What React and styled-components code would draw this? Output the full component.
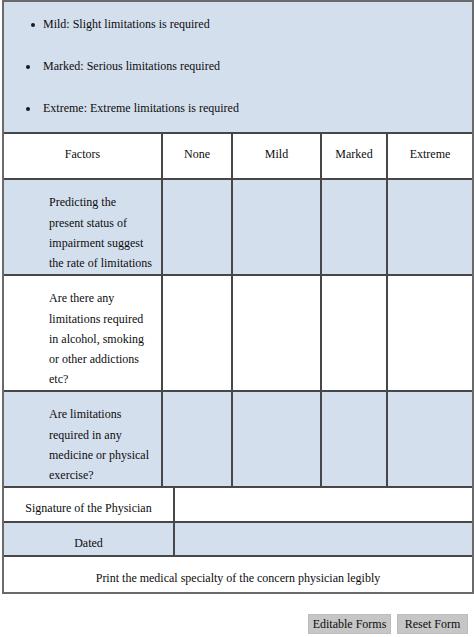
import React from "react";
import styled, { createGlobalStyle } from "styled-components";

const Global = createGlobalStyle`
  html, body { margin: 0; padding: 0; background: #ffffff; }
  body { font-family: "Liberation Serif", "Times New Roman", serif; color: #0d0d0d; }
`;

const BLUE = "#d4dfee";
const LINE = "#474747";

const Page = styled.div`
  width: 474px;
  height: 637px;
  box-sizing: border-box;
  padding: 0 0 0 2px;
  display: flex;
  flex-direction: column;
`;

const Form = styled.div`
  width: 472px;
  box-sizing: border-box;
  border: 2px solid #6a6a6a;
  display: flex;
  flex-direction: column;
  font-size: 12px;
`;

const Intro = styled.ul`
  margin: 0;
  list-style: none;
  background: ${BLUE};
  height: 132px;
  box-sizing: border-box;
  padding: 12px 0 0 0;
  border-bottom: 2px solid ${LINE};
  display: flex;
  flex-direction: column;
  gap: 22px;
`;

const Bullet = styled.li`
  position: relative;
  line-height: 20px;
  padding-left: 39px;
  &::before {
    content: "";
    position: absolute;
    left: ${(p) => p.$dot}px;
    top: 9px;
    width: 4px;
    height: 4px;
    border-radius: 50%;
    background: #1a1a1a;
  }
`;

const Matrix = styled.div`
  display: grid;
  grid-template-columns: 159px 70px 89px 66px 1fr;
`;

const Cell = styled.div`
  box-sizing: border-box;
  height: ${(p) => p.$h}px;
  background: ${(p) => (p.$blue ? BLUE : "#ffffff")};
  border-bottom: ${(p) => (p.$end ? "none" : `2px solid ${LINE}`)};
  border-right: ${(p) => (p.$last ? "none" : `2px solid ${LINE}`)};
  display: flex;
  align-items: center;
  justify-content: center;
  text-align: center;
`;

const HeadCell = styled(Cell)`
  padding-bottom: 4px;
`;

const InfoCell = styled(Cell)`
  padding-top: 8px;
`;

const FactorCell = styled(Cell)`
  justify-content: flex-start;
  text-align: left;
  padding: 12px 0 0 45px;
  line-height: 20.3px;
  white-space: nowrap;
`;

const InfoRow = styled.div`
  display: grid;
  grid-template-columns: ${(p) => (p.$full ? "1fr" : "171px 1fr")};
`;

const Buttons = styled.div`
  display: flex;
  justify-content: flex-end;
  gap: 6px;
  padding: 20px 6px 0 0;
`;

const Button = styled.button`
  width: ${(p) => p.$w}px;
  height: 20px;
  padding: 0;
  border: 1px solid #bcbcbc;
  background: #c6c6c6;
  font-family: "Liberation Serif", "Times New Roman", serif;
  font-size: 12px;
  color: #0d0d0d;
  cursor: pointer;
`;

const heads = ["Factors", "None", "Mild", "Marked", "Extreme"];

const rows = [
  {
    h: 96,
    blue: true,
    lines: [
      "Predicting the",
      "present status of",
      "impairment suggest",
      "the rate of limitations",
    ],
  },
  {
    h: 116,
    blue: false,
    lines: [
      "Are there any",
      "limitations required",
      "in alcohol, smoking",
      "or other addictions",
      "etc?",
    ],
  },
  {
    h: 96,
    blue: true,
    lines: [
      "Are limitations",
      "required in any",
      "medicine or physical",
      "exercise?",
    ],
  },
];

export default function App() {
  return (
    <>
      <Global />
      <Page>
        <Form>
          <Intro>
            <Bullet $dot={27}>Mild: Slight limitations is required</Bullet>
            <Bullet $dot={22}>Marked: Serious limitations required</Bullet>
            <Bullet $dot={22}>Extreme: Extreme limitations is required</Bullet>
          </Intro>
          <Matrix>
            {heads.map((t, i) => (
              <HeadCell key={t} $h={46} $last={i === 4}>
                {t}
              </HeadCell>
            ))}
            {rows.map((r, ri) => (
              <React.Fragment key={ri}>
                <FactorCell $h={r.h} $blue={r.blue}>
                  <div>
                    {r.lines.map((l, li) => (
                      <React.Fragment key={li}>
                        {l}
                        {li < r.lines.length - 1 && <br />}
                      </React.Fragment>
                    ))}
                  </div>
                </FactorCell>
                {[1, 2, 3, 4].map((c) => (
                  <Cell key={c} $h={r.h} $blue={r.blue} $last={c === 4} />
                ))}
              </React.Fragment>
            ))}
          </Matrix>
          <InfoRow>
            <InfoCell $h={35}>Signature of the Physician</InfoCell>
            <InfoCell $h={35} $last />
          </InfoRow>
          <InfoRow>
            <InfoCell $h={34} $blue>
              Dated
            </InfoCell>
            <InfoCell $h={34} $blue $last />
          </InfoRow>
          <InfoRow $full>
            <InfoCell $h={35} $last $end>
              Print the medical specialty of the concern physician legibly
            </InfoCell>
          </InfoRow>
        </Form>
        <Buttons>
          <Button $w={83}>Editable Forms</Button>
          <Button $w={71}>Reset Form</Button>
        </Buttons>
      </Page>
    </>
  );
}
